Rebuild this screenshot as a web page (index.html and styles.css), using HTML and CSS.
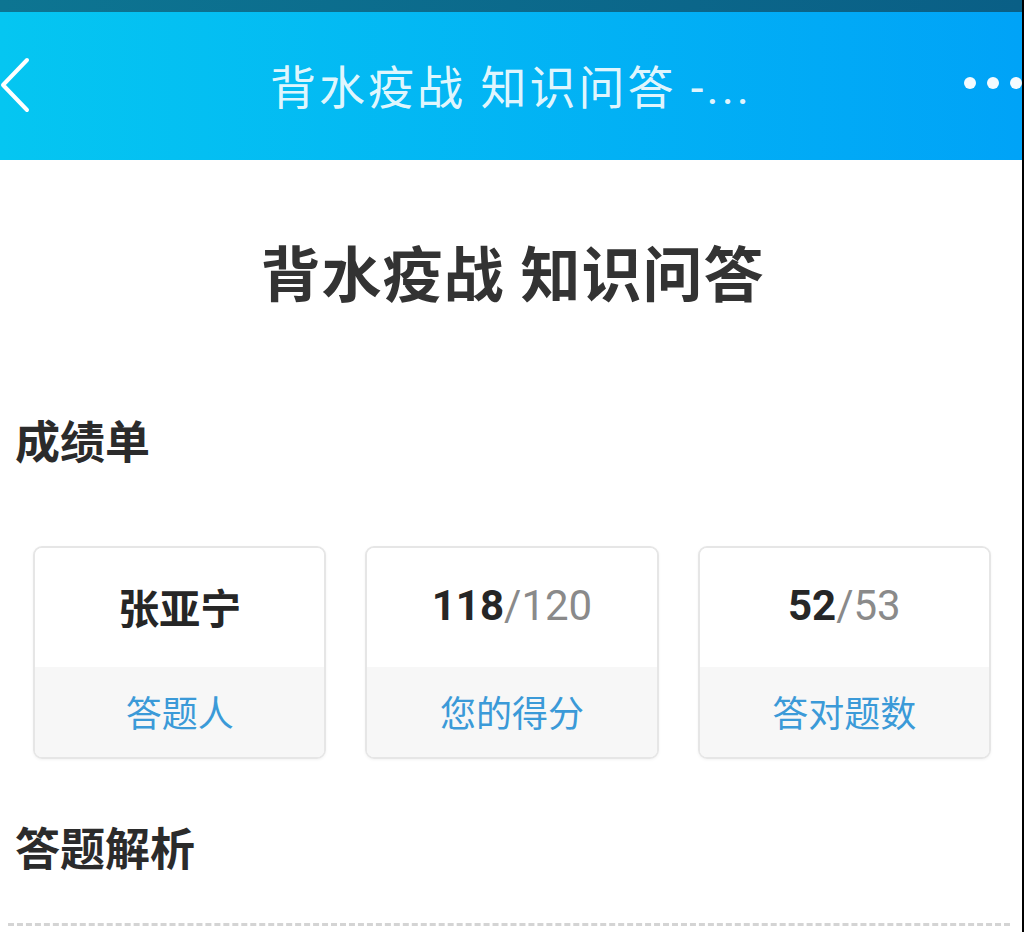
FILE: index.html
```html
<!DOCTYPE html>
<html lang="zh-CN">

<head>
    <meta charset="UTF-8">
    <title>背水疫战 知识问答</title>
    <link rel="stylesheet" href="styles.css">
</head>

<body>
    <div class="page">
        <div class="statusbar"></div>

        <header class="navbar">
            <span class="back">
                <svg width="30" height="56" viewBox="0 0 30 56">
                    <polyline points="27,3 3,28 27,53" fill="none" stroke="#ffffff" stroke-width="4" stroke-linecap="round" stroke-linejoin="round" />
                </svg>
            </span>
            <h1 class="nav-title">背水疫战 知识问答 -...</h1>
            <span class="more">
                <i></i><i></i><i></i>
            </span>
        </header>

        <main class="content">
            <h2 class="quiz-title">背水疫战 知识问答</h2>

            <h3 class="section-title">成绩单</h3>

            <div class="score-cards">
                <div class="score-card">
                    <div class="score-value">张亚宁</div>
                    <div class="score-label">答题人</div>
                </div>
                <div class="score-card">
                    <div class="score-value num"><b>118</b>/120</div>
                    <div class="score-label">您的得分</div>
                </div>
                <div class="score-card">
                    <div class="score-value num"><b>52</b>/53</div>
                    <div class="score-label">答对题数</div>
                </div>
            </div>

            <h3 class="section-title analysis">答题解析</h3>

            <div class="divider"></div>
        </main>
    </div>
</body>

</html>
```

FILE: styles.css
```css
html {
    background: #000;
}

body {
    margin: 0;
    font-family: Roboto, "Noto Sans CJK SC", sans-serif;
    color: #333;
}

.page {
    width: 1022px;
    min-height: 932px;
    background: #fff;
}

.statusbar {
    height: 12px;
    background: linear-gradient(to right, #0d7592, #0a5f86);
}

.navbar {
    height: 148px;
    display: flex;
    align-items: center;
    background: linear-gradient(to right, #05c6f1, #00a3f7);
    color: #fff;
}

.back {
    width: 60px;
    display: flex;
    align-items: center;
    margin-top: -2px;
}

.nav-title {
    flex: 1;
    margin: -4px 0 0;
    text-align: center;
    font-size: 46px;
    font-weight: normal;
    letter-spacing: 3px;
    color: rgba(255, 255, 255, 0.9);
}

.more {
    width: 60px;
    display: flex;
    justify-content: flex-end;
    gap: 11px;
    margin-top: -6px;
}

.more i {
    width: 12px;
    height: 12px;
    border-radius: 50%;
    background: #f4fbff;
}

.content {
    padding: 0 12px 0 15px;
}

.quiz-title {
    margin: 82px 0 0;
    text-align: center;
    font-size: 60px;
    line-height: 70px;
    letter-spacing: 1px;
    font-weight: bold;
    color: #333;
}

.section-title {
    margin: 104px 0 0;
    font-size: 45px;
    line-height: 56px;
    font-weight: bold;
    color: #2b2b2b;
}

.section-title.analysis {
    margin-top: 64px;
}

.score-cards {
    display: grid;
    grid-template-columns: repeat(3, 1fr);
    gap: 39px;
    margin: 74px 19px 0 18px;
}

.score-card {
    border: 2px solid #e6e6e6;
    border-radius: 9px;
    overflow: hidden;
    box-shadow: 0 1px 3px rgba(0, 0, 0, 0.05);
}

.score-value {
    height: 119px;
    padding-bottom: 4px;
    box-sizing: border-box;
    display: flex;
    align-items: center;
    justify-content: center;
    font-size: 41px;
    font-weight: bold;
    color: #262626;
    background: #fff;
}

.score-value.num {
    font-size: 42px;
    font-weight: normal;
    color: #8a8a8a;
}

.score-value.num b {
    color: #262626;
}

.score-label {
    height: 90px;
    padding-bottom: 2px;
    box-sizing: border-box;
    display: flex;
    align-items: center;
    justify-content: center;
    font-size: 36px;
    color: #3b9ad8;
    background: #f7f7f7;
}

.divider {
    margin: 44px 0 0 -7px;
    border-top: 3px dashed #d4d4d4;
}
```
